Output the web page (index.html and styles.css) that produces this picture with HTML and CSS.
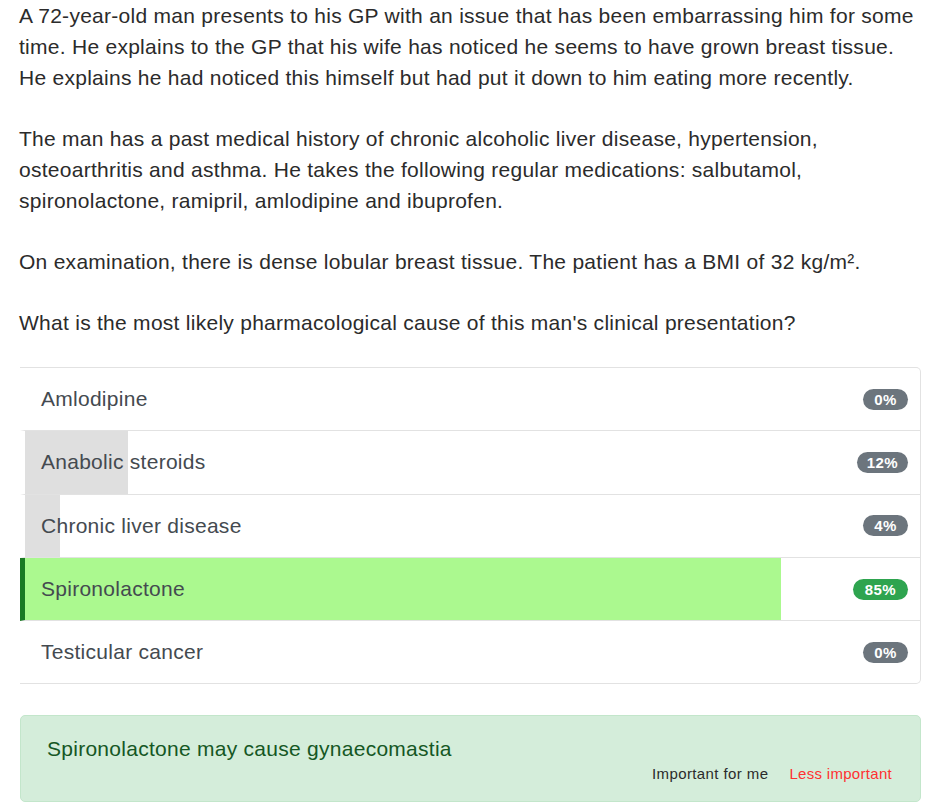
FILE: index.html
```html
<!DOCTYPE html>
<html lang="en">
<head>
<meta charset="utf-8">
<title>Question</title>
<link rel="stylesheet" href="styles.css">
</head>
<body>
<main class="page">
  <div class="stem">
    <p>A 72-year-old man presents to his GP with an issue that has been embarrassing him for some time. He explains to the GP that his wife has noticed he seems to have grown breast tissue. He explains he had noticed this himself but had put it down to him eating more recently.</p>
    <p>The man has a past medical history of chronic alcoholic liver disease, hypertension, osteoarthritis and asthma. He takes the following regular medications: salbutamol, spironolactone, ramipril, amlodipine and ibuprofen.</p>
    <p>On examination, there is dense lobular breast tissue. The patient has a BMI of 32 kg/m².</p>
    <p>What is the most likely pharmacological cause of this man's clinical presentation?</p>
  </div>

  <ul class="answers">
    <li class="answer">
      <span class="bar" style="width:0%"></span>
      <span class="label">Amlodipine</span>
      <span class="badge">0%</span>
    </li>
    <li class="answer">
      <span class="bar" style="width:11.5%"></span>
      <span class="label">Anabolic steroids</span>
      <span class="badge">12%</span>
    </li>
    <li class="answer">
      <span class="bar" style="width:3.9%"></span>
      <span class="label">Chronic liver disease</span>
      <span class="badge">4%</span>
    </li>
    <li class="answer correct">
      <span class="bar" style="width:84.5%"></span>
      <span class="label">Spironolactone</span>
      <span class="badge badge-success">85%</span>
    </li>
    <li class="answer">
      <span class="bar" style="width:0%"></span>
      <span class="label">Testicular cancer</span>
      <span class="badge">0%</span>
    </li>
  </ul>

  <div class="explanation">
    <div class="explanation-text">Spironolactone may cause gynaecomastia</div>
    <div class="rating">
      <span class="rate rate-important">Important for me</span>
      <span class="rate rate-less">Less important</span>
    </div>
  </div>
</main>
</body>
</html>
```

FILE: styles.css
```css
* {
  box-sizing: border-box;
}

html, body {
  margin: 0;
  padding: 0;
  background: #ffffff;
}

body {
  font-family: "Liberation Sans", Arial, Helvetica, sans-serif;
  color: #212529;
}

.page {
  padding: 0 13px 0 19px;
}

.stem p {
  margin: 0 0 30px 0;
  font-size: 21px;
  letter-spacing: 0.27px;
  line-height: 31px;
  color: #2b2b2b;
}

.stem p:last-child {
  margin-bottom: 29px;
}

.answers {
  list-style: none;
  margin: 0 0 0 1px;
  padding: 0;
  border: 1px solid #e2e2e2;
  border-left: none;
  border-radius: 0 5px 5px 0;
}

.answer {
  position: relative;
  display: flex;
  align-items: center;
  justify-content: space-between;
  padding: 16px 12px 16px 16px;
  border-left: 5px solid transparent;
  border-bottom: 1px solid #e2e2e2;
  font-size: 21px;
  letter-spacing: 0.27px;
  line-height: 30.3px;
  color: #444a50;
}

.answer:last-child {
  border-bottom: none;
}

.answer.correct {
  border-left-color: #1b7a25;
}

.bar {
  position: absolute;
  left: 0;
  top: 0;
  bottom: 0;
  background: #dfdfdf;
}

.correct .bar {
  background: #abf98f;
}

.label,
.badge {
  position: relative;
}

.badge {
  display: inline-block;
  min-width: 45px;
  padding: 0 10px;
  border-radius: 11px;
  background: #6c757d;
  color: #ffffff;
  font-size: 15px;
  font-weight: 700;
  line-height: 21px;
  text-align: center;
  letter-spacing: 0.4px;
}

.badge-success {
  background: #2ea44f;
  padding: 0 12px;
}

.explanation {
  margin: 31px 0 0 1px;
  padding: 18px 28px 17px 26px;
  background: #d4edda;
  border: 1px solid #c3e6cb;
  border-radius: 5px;
  color: #155724;
}

.explanation-text {
  font-size: 21px;
  letter-spacing: 0.27px;
  line-height: 29px;
}

.rating {
  display: flex;
  justify-content: flex-end;
  gap: 21px;
  font-size: 15px;
  line-height: 21px;
}

.rate-important {
  color: #2b2b2b;
  letter-spacing: 0.4px;
}

.rate-less {
  color: #ff3131;
  letter-spacing: 0.3px;
}
```
